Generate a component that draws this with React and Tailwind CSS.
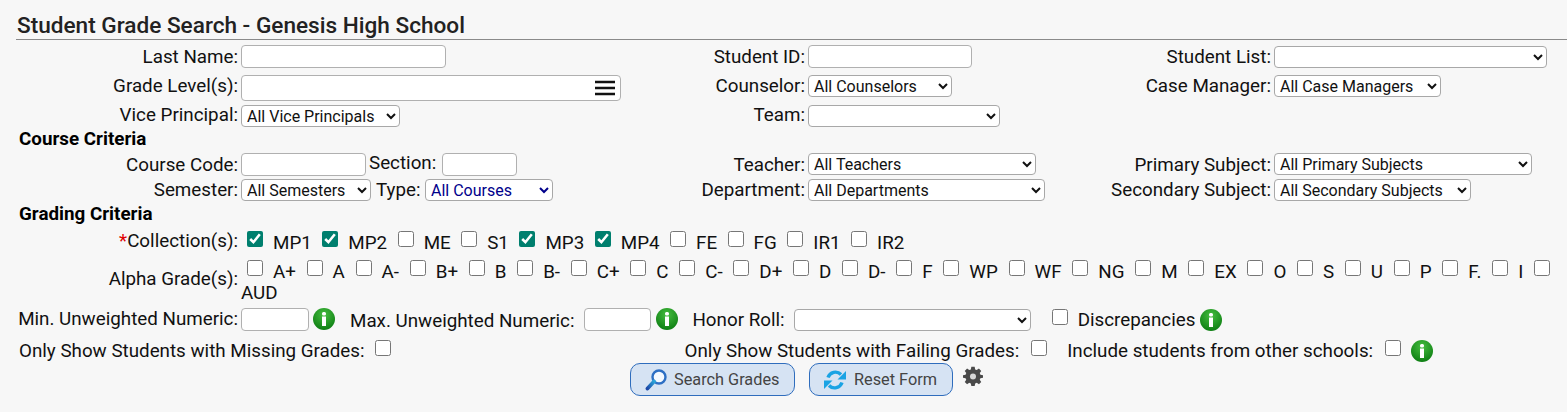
import React from 'react';

const inputClass = 'h-[23px] bg-white border border-[#b0b0b0] rounded-[4px] outline-none';
const selectClass = 'h-[22px] bg-white border border-[#a8a8a8] rounded-[4px] text-[16px] pl-[1px]';

const collections = [
  ['MP1', true], ['MP2', true], ['ME', false], ['S1', false], ['MP3', true], ['MP4', true],
  ['FE', false], ['FG', false], ['IR1', false], ['IR2', false],
];
const alphaGrades = ['A+', 'A', 'A-', 'B+', 'B', 'B-', 'C+', 'C', 'C-', 'D+', 'D', 'D-', 'F', 'WP', 'WF', 'NG', 'M', 'EX', 'O', 'S', 'U', 'P', 'F.', 'I'];

const Check = ({ checked = false, className = '' }) => (
  <input type="checkbox" checked={checked} readOnly className={`w-4 h-4 m-0 shrink-0 accent-[#007f6e] ${className}`} />
);

const Info = ({ className = '' }) => (
  <svg viewBox="0 0 22 22" className={`w-[22px] h-[22px] shrink-0 ${className}`}>
    <defs>
      <radialGradient id="infoGreen" cx="50%" cy="30%" r="75%">
        <stop offset="0%" stopColor="#45bd3f" />
        <stop offset="100%" stopColor="#0a7a10" />
      </radialGradient>
    </defs>
    <circle cx="11" cy="11" r="11" fill="url(#infoGreen)" />
    <rect x="9" y="4" width="4" height="3.500" rx="1.500" fill="#fff" />
    <rect x="9" y="8.500" width="4" height="9.500" fill="#fff" />
  </svg>
);

const Label = ({ children, width = 'w-[238px]', className = '' }) => (
  <div className={`${width} shrink-0 text-right ${className}`}>{children}</div>
);

const Field = ({ label, labelWidth, labelClass = '', children }) => (
  <div className="flex items-center shrink-0">
    <Label width={labelWidth} className={labelClass}>{label}</Label>
    <div className="ml-[3px] flex items-center">{children}</div>
  </div>
);

const Row = ({ className = '', children }) => (
  <div className={`flex items-center ${className}`}>{children}</div>
);

const SearchIcon = () => (
  <svg viewBox="0 0 22 22" className="w-[22px] h-[22px] shrink-0">
    <defs>
      <linearGradient id="lensHandle" x1="1" y1="0" x2="0" y2="1">
        <stop offset="0%" stopColor="#2aa3d8" />
        <stop offset="100%" stopColor="#1c49a8" />
      </linearGradient>
    </defs>
    <circle cx="14" cy="8" r="6.500" fill="#f4f9ff" stroke="#2d6fc4" strokeWidth="2.400" />
    <path d="M9 12.500 2.500 19.500" stroke="url(#lensHandle)" strokeWidth="3.800" strokeLinecap="round" fill="none" />
  </svg>
);

const ResetIcon = () => (
  <svg viewBox="0 0 22 22" className="w-[22px] h-[22px] shrink-0" fill="none" stroke="#1aa3e4" strokeWidth="3.400">
    <path d="M4 8.500A7.800 7.800 0 0 1 17 5.500" />
    <path d="M18 13.500A7.800 7.800 0 0 1 5 16.500" />
    <path d="M22 2v8.500h-8.500z" fill="#1aa3e4" stroke="none" />
    <path d="M0 20v-8.500h8.500z" fill="#1aa3e4" stroke="none" />
  </svg>
);

const GearIcon = () => (
  <svg viewBox="0 0 24 24" className="w-[22px] h-[20px] blur-[0.6px]">
    <path
      fill="#4a4a4a"
      d="M10 1h4l.6 3.100 1.900.8L19.100 3.100 21.900 5.900 20.100 8.500l.8 1.900L24 11v3l-3.100.6-.8 1.900 1.800 2.600-2.800 2.800-2.600-1.800-1.900.8L14 24h-4l-.6-3.100-1.900-.8-2.600 1.800-2.800-2.800 1.800-2.600-.8-1.900L0 14v-3l3.100-.6.8-1.900L2.100 5.900 4.900 3.100l2.600 1.800 1.900-.8z"
    />
    <circle cx="12" cy="12.500" r="3.600" fill="#d8d8d8" />
  </svg>
);

export default function App() {
  return (
    <div className="w-[1567px] h-[412px] overflow-hidden bg-[#f7f7f7] text-[18.8px] leading-[21px] text-[#111] font-['Roboto',sans-serif]">
      <div className="h-[40px] pt-[13px] ml-[16px] pl-[1px] text-[22.6px] leading-[26px] font-medium text-[#222] border-b border-[#8a8a8a]">
        Student Grade Search - Genesis High School
      </div>

      <Row className="h-[33px]">
        <Field label="Last Name:" labelWidth="w-[238px]" labelClass="translate-y-[1px]">
          <input className={`${inputClass} w-[205px]`} readOnly />
        </Field>
        <Field label="Student ID:" labelWidth="w-[359px]" labelClass="translate-y-[1px]">
          <input className={`${inputClass} w-[164px]`} readOnly />
        </Field>
        <Field label="Student List:" labelWidth="w-[299px]" labelClass="translate-y-[1px]">
          <select className={`${selectClass} w-[273px]`}><option></option></select>
        </Field>
      </Row>

      <Row className="h-[28px]">
        <Field label="Grade Level(s):" labelWidth="w-[238px]" labelClass="-translate-y-[1px]">
          <div className={`${inputClass} w-[380px] h-[26px] flex items-center justify-end pr-[5px] translate-y-[1px]`}>
            <svg viewBox="0 0 20 16" className="w-[20px] h-[16px]">
              <path d="M0 2h20M0 8h20M0 14h20" stroke="#111" strokeWidth="2.400" />
            </svg>
          </div>
        </Field>
        <Field label="Counselor:" labelWidth="w-[184px]" labelClass="-translate-y-[1px]">
          <select className={`${selectClass} w-[144px] -translate-y-[1px]`}><option>All Counselors</option></select>
        </Field>
        <Field label="Case Manager:" labelWidth="w-[319px]" labelClass="-translate-y-[1px]">
          <select className={`${selectClass} w-[167px] -translate-y-[1px]`}><option>All Case Managers</option></select>
        </Field>
      </Row>

      <Row className="h-[27px] pt-[2px]">
        <Field label="Vice Principal:" labelWidth="w-[238px]">
          <select className={`${selectClass} w-[159px]`}><option>All Vice Principals</option></select>
        </Field>
        <Field label="Team:" labelWidth="w-[405px]">
          <select className={`${selectClass} w-[192px]`}><option></option></select>
        </Field>
      </Row>

      <div className="h-[23px] pl-[19px] pt-[1px] font-bold text-black">Course Criteria</div>

      <Row className="h-[27px]">
        <Field label="Course Code:" labelWidth="w-[238px]" labelClass="translate-y-[1px]">
          <input className={`${inputClass} w-[125px]`} readOnly />
          <span className="w-[76px] pl-[3px] -translate-y-[1px]">Section:</span>
          <input className={`${inputClass} w-[75px]`} readOnly />
        </Field>
        <Field label="Teacher:" labelWidth="w-[288px]" labelClass="translate-y-[1px]">
          <select className={`${selectClass} w-[228px] -translate-y-[1px]`}><option>All Teachers</option></select>
        </Field>
        <Field label="Primary Subject:" labelWidth="w-[235px]" labelClass="translate-y-[1px]">
          <select className={`${selectClass} w-[258px] -translate-y-[1px]`}><option>All Primary Subjects</option></select>
        </Field>
      </Row>

      <Row className="h-[24px]">
        <Field label="Semester:" labelWidth="w-[238px]">
          <select className={`${selectClass} w-[130px]`}><option>All Semesters</option></select>
          <span className="w-[54px] pl-[5px]">Type:</span>
          <select className={`${selectClass} w-[128px] text-[#00008b]`}><option>All Courses</option></select>
        </Field>
        <Field label="Department:" labelWidth="w-[252px]">
          <select className={`${selectClass} w-[237px]`}><option>All Departments</option></select>
        </Field>
        <Field label="Secondary Subject:" labelWidth="w-[226px]">
          <select className={`${selectClass} w-[197px]`}><option>All Secondary Subjects</option></select>
        </Field>
      </Row>

      <div className="h-[24px] pl-[19px] pt-[2px] font-bold text-black">Grading Criteria</div>

      <Row className="h-[30px]">
        <Label><span className="text-[#e00000]">*</span>Collection(s):</Label>
        <div className="ml-[9px] flex items-center">
          {collections.map(([name, checked]) => (
            <div key={name} className="flex items-center mr-[10.500px]">
              <Check checked={checked} className="-translate-y-[2px]" />
              <span className="ml-[10px] translate-y-[2px]">{name}</span>
            </div>
          ))}
        </div>
      </Row>

      <div className="flex h-[49px]">
        <div className="h-[46px] flex items-center">
          <Label>Alpha Grade(s):</Label>
        </div>
        <div className="ml-[3px] flex-1 pt-[4px]">
          {alphaGrades.map(name => (
            <span key={name}>
              <Check className="inline-block align-[2px] ml-[6px] mr-[10px]" />
              <span className="mr-[4.700px]">{name}</span>
            </span>
          ))}
          <Check className="inline-block align-[2px] ml-[6px] mr-[10px]" />
          <span>AUD</span>
        </div>
      </div>

      <Row className="h-[29px]">
        <Field label="Min. Unweighted Numeric:" labelWidth="w-[238px]">
          <input className={`${inputClass} w-[68px]`} readOnly />
        </Field>
        <Info className="ml-[4px] -translate-y-[1px]" />
        <span className="ml-[15px] translate-y-[2px]">Max. Unweighted Numeric:</span>
        <input className={`${inputClass} w-[67px] ml-[10px]`} readOnly />
        <Info className="ml-[5px] -translate-y-[1px]" />
        <span className="ml-[14px] translate-y-[1px]">Honor Roll:</span>
        <select className={`${selectClass} w-[237px] ml-[9px]`}><option></option></select>
        <Check className="ml-[21px] -translate-y-[3px]" />
        <span className="ml-[10px] translate-y-[1px]">Discrepancies</span>
        <Info className="ml-[5px]" />
      </Row>

      <Row className="h-[29px] pt-[4px]">
        <span className="ml-[19px] translate-y-[1px]">Only Show Students with Missing Grades:</span>
        <Check className="ml-[10px] -translate-y-[3px]" />
        <span className="ml-[294px] translate-y-[1px]">Only Show Students with Failing Grades:</span>
        <Check className="ml-[12px] -translate-y-[3px]" />
        <span className="ml-[20px] translate-y-[1px]">Include students from other schools:</span>
        <Check className="ml-[12px] -translate-y-[3px]" />
        <Info className="ml-[10px]" />
      </Row>

      <Row className="ml-[630px] items-start">
        <button className="w-[165px] h-[33px] flex items-center pl-[14px] gap-[7px] bg-[#d6e3f3] border border-[#2f6dbd] rounded-[10px] text-[16.300px] text-[#444]">
          <SearchIcon />
          Search Grades
        </button>
        <button className="ml-[14px] w-[144px] h-[33px] flex items-center pl-[14px] gap-[8px] bg-[#d6e3f3] border border-[#2f6dbd] rounded-[10px] text-[16.300px] text-[#444]">
          <ResetIcon />
          Reset Form
        </button>
        <div className="ml-[9px] mt-[3px]"><GearIcon /></div>
      </Row>
    </div>
  );
}
